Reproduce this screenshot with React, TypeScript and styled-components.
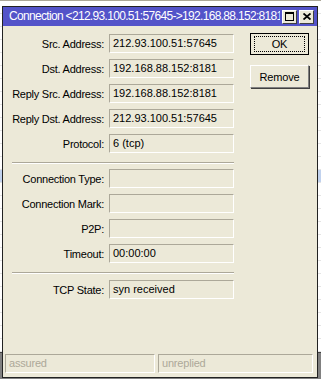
import React from 'react'
import styled, { createGlobalStyle } from 'styled-components'

const GlobalStyle = createGlobalStyle`
  html, body {
    margin: 0;
    padding: 0;
    background: #ece9d8;
  }
  body {
    font-family: 'Liberation Sans', Arial, sans-serif;
    font-size: 11px;
    color: #000;
  }
`

const Desktop = styled.div`
  position: relative;
  width: 321px;
  height: 379px;
  overflow: hidden;
  background: #ece9d8;
  display: flex;
  flex-direction: column;
`

const TabStrip = styled.div`
  height: 6px;
  overflow: hidden;
  display: flex;
  border-bottom: 1px solid #aca899;
`

const TabLabel = styled.div`
  margin-top: -5px;
  margin-left: -2px;
  padding-right: 4px;
  line-height: 12px;
  letter-spacing: -0.2px;
  border-right: 1px solid #aca899;
  white-space: nowrap;
`

const ListArea = styled.div`
  flex: 1;
  background: #fff;
  display: flex;
  flex-direction: column;
`

const ListRow = styled.div<{ $selected?: boolean }>`
  height: 12px;
  border-bottom: 1px solid #e4e4e4;
  background: ${(p) => (p.$selected ? '#c1d2ee' : '#fff')};
`

const ListBottom = styled.div`
  height: 45px;
  border-top: 1px solid #404040;
  background: #808080;
`

const Window = styled.div`
  position: absolute;
  left: 2px;
  top: 6px;
  width: 316px;
  height: 372px;
  box-sizing: border-box;
  border: 1px solid #222;
  background: #ece9d8;
  display: flex;
  flex-direction: column;
`

const TitleBar = styled.div`
  height: 19px;
  background: #5353c9;
  display: flex;
  align-items: center;
  padding: 0 3px 0 6px;
  gap: 2px;
`

const TitleText = styled.div`
  flex: 1;
  min-width: 0;
  overflow: hidden;
  white-space: nowrap;
  color: #fff;
  font-size: 12px;
  letter-spacing: -0.68px;
  line-height: 19px;
`

const CaptionButton = styled.button`
  width: 15px;
  height: 14px;
  padding: 0;
  box-sizing: border-box;
  background: #ece9d8;
  border: 1px solid;
  border-color: #fff #404040 #404040 #fff;
  display: flex;
  align-items: center;
  justify-content: center;
  flex-shrink: 0;
`

const Body = styled.div`
  flex: 1;
  display: flex;
  flex-direction: column;
`

const Main = styled.div`
  display: flex;
  padding-top: 7px;
`

const Form = styled.div`
  display: grid;
  grid-template-columns: 96px 125px;
  column-gap: 5px;
  row-gap: 6px;
  padding-left: 5px;
  margin-top: 1px;
  align-items: center;
`

const Label = styled.div`
  text-align: right;
  white-space: nowrap;
  letter-spacing: -0.25px;
`

const Field = styled.div`
  height: 19px;
  box-sizing: border-box;
  border: 1px solid;
  border-color: #aca899 #fff #fff #aca899;
  padding-left: 3px;
  line-height: 17px;
  white-space: nowrap;
  overflow: hidden;
`

const Separator = styled.div<{ $below: number }>`
  grid-column: 1 / -1;
  margin: 3px 0 ${(p) => p.$below}px 4px;
  height: 0;
  border-top: 1px solid #aca899;
  border-bottom: 1px solid #fff;
`

const ButtonColumn = styled.div`
  display: flex;
  flex-direction: column;
  gap: 10px;
  margin-left: 16px;
`

const PushButton = styled.button<{ $default?: boolean }>`
  width: 59px;
  height: ${(p) => (p.$default ? 22 : 23)}px;
  box-sizing: border-box;
  padding: 0;
  font-family: 'Liberation Sans', Arial, sans-serif;
  font-size: 11px;
  letter-spacing: -0.2px;
  color: #000;
  background: #ece9d8;
  border: 1px solid;
  border-color: ${(p) => (p.$default ? '#000' : '#fff #808080 #808080 #fff')};
  box-shadow: ${(p) => (p.$default ? 'none' : '1px 1px 0 #404040')};
  display: flex;
  align-items: center;
  justify-content: center;
`

const FocusRing = styled.span`
  box-sizing: border-box;
  width: 51px;
  height: 16px;
  border: 1px dotted #000;
  display: flex;
  align-items: center;
  justify-content: center;
`

const StatusBar = styled.div`
  margin-top: auto;
  display: flex;
  gap: 3px;
  padding: 0 4px 4px 2px;
`

const StatusCell = styled.div<{ $width: number }>`
  width: ${(p) => p.$width}px;
  height: 19px;
  box-sizing: border-box;
  border: 1px solid;
  border-color: #aca899 #fff #fff #aca899;
  color: #aca899;
  padding-left: 3px;
  line-height: 17px;
  letter-spacing: -0.2px;
`

const MaxIcon = () => (
  <svg width="9" height="9" viewBox="0 0 9 9">
    <rect x="0.5" y="0.5" width="8" height="8" fill="none" stroke="#000" />
    <rect x="0" y="0" width="9" height="2" fill="#000" />
  </svg>
)

const CloseIcon = () => (
  <svg width="8" height="7" viewBox="0 0 8 7">
    <path d="M0.5 0.5 L7.5 6.5 M7.5 0.5 L0.5 6.5" stroke="#000" strokeWidth="1.8" />
  </svg>
)

const firstGroup = [
  ['Src. Address:', '212.93.100.51:57645'],
  ['Dst. Address:', '192.168.88.152:8181'],
  ['Reply Src. Address:', '192.168.88.152:8181'],
  ['Reply Dst. Address:', '212.93.100.51:57645'],
  ['Protocol:', '6 (tcp)'],
]

const secondGroup = [
  ['Connection Type:', ''],
  ['Connection Mark:', ''],
  ['P2P:', ''],
  ['Timeout:', '00:00:00'],
]

const renderRows = (rows: string[][]) =>
  rows.map(([label, value]) => (
    <React.Fragment key={label}>
      <Label>{label}</Label>
      <Field>{value}</Field>
    </React.Fragment>
  ))

const App: React.FC = () => {
  const rows = Array.from({ length: 27 }, (_, i) => i)

  return (
    <>
      <GlobalStyle />
      <Desktop>
        <TabStrip>
          <TabLabel>uer / Protocols</TabLabel>
        </TabStrip>
        <ListArea>
          {rows.map((i) => (
            <ListRow key={i} $selected={i === 13} />
          ))}
          <ListBottom />
        </ListArea>

        <Window>
          <TitleBar>
            <TitleText>Connection &lt;212.93.100.51:57645-&gt;192.168.88.152:8181&gt;</TitleText>
            <CaptionButton>
              <MaxIcon />
            </CaptionButton>
            <CaptionButton>
              <CloseIcon />
            </CaptionButton>
          </TitleBar>
          <Body>
            <Main>
              <Form>
                {renderRows(firstGroup)}
                <Separator $below={-1} />
                {renderRows(secondGroup)}
                <Separator $below={0} />
                <Label>TCP State:</Label>
                <Field>syn received</Field>
              </Form>
              <ButtonColumn>
                <PushButton $default>
                  <FocusRing>OK</FocusRing>
                </PushButton>
                <PushButton>Remove</PushButton>
              </ButtonColumn>
            </Main>
            <StatusBar>
              <StatusCell $width={151}>assured</StatusCell>
              <StatusCell $width={156}>unreplied</StatusCell>
            </StatusBar>
          </Body>
        </Window>
      </Desktop>
    </>
  )
}

export default App
